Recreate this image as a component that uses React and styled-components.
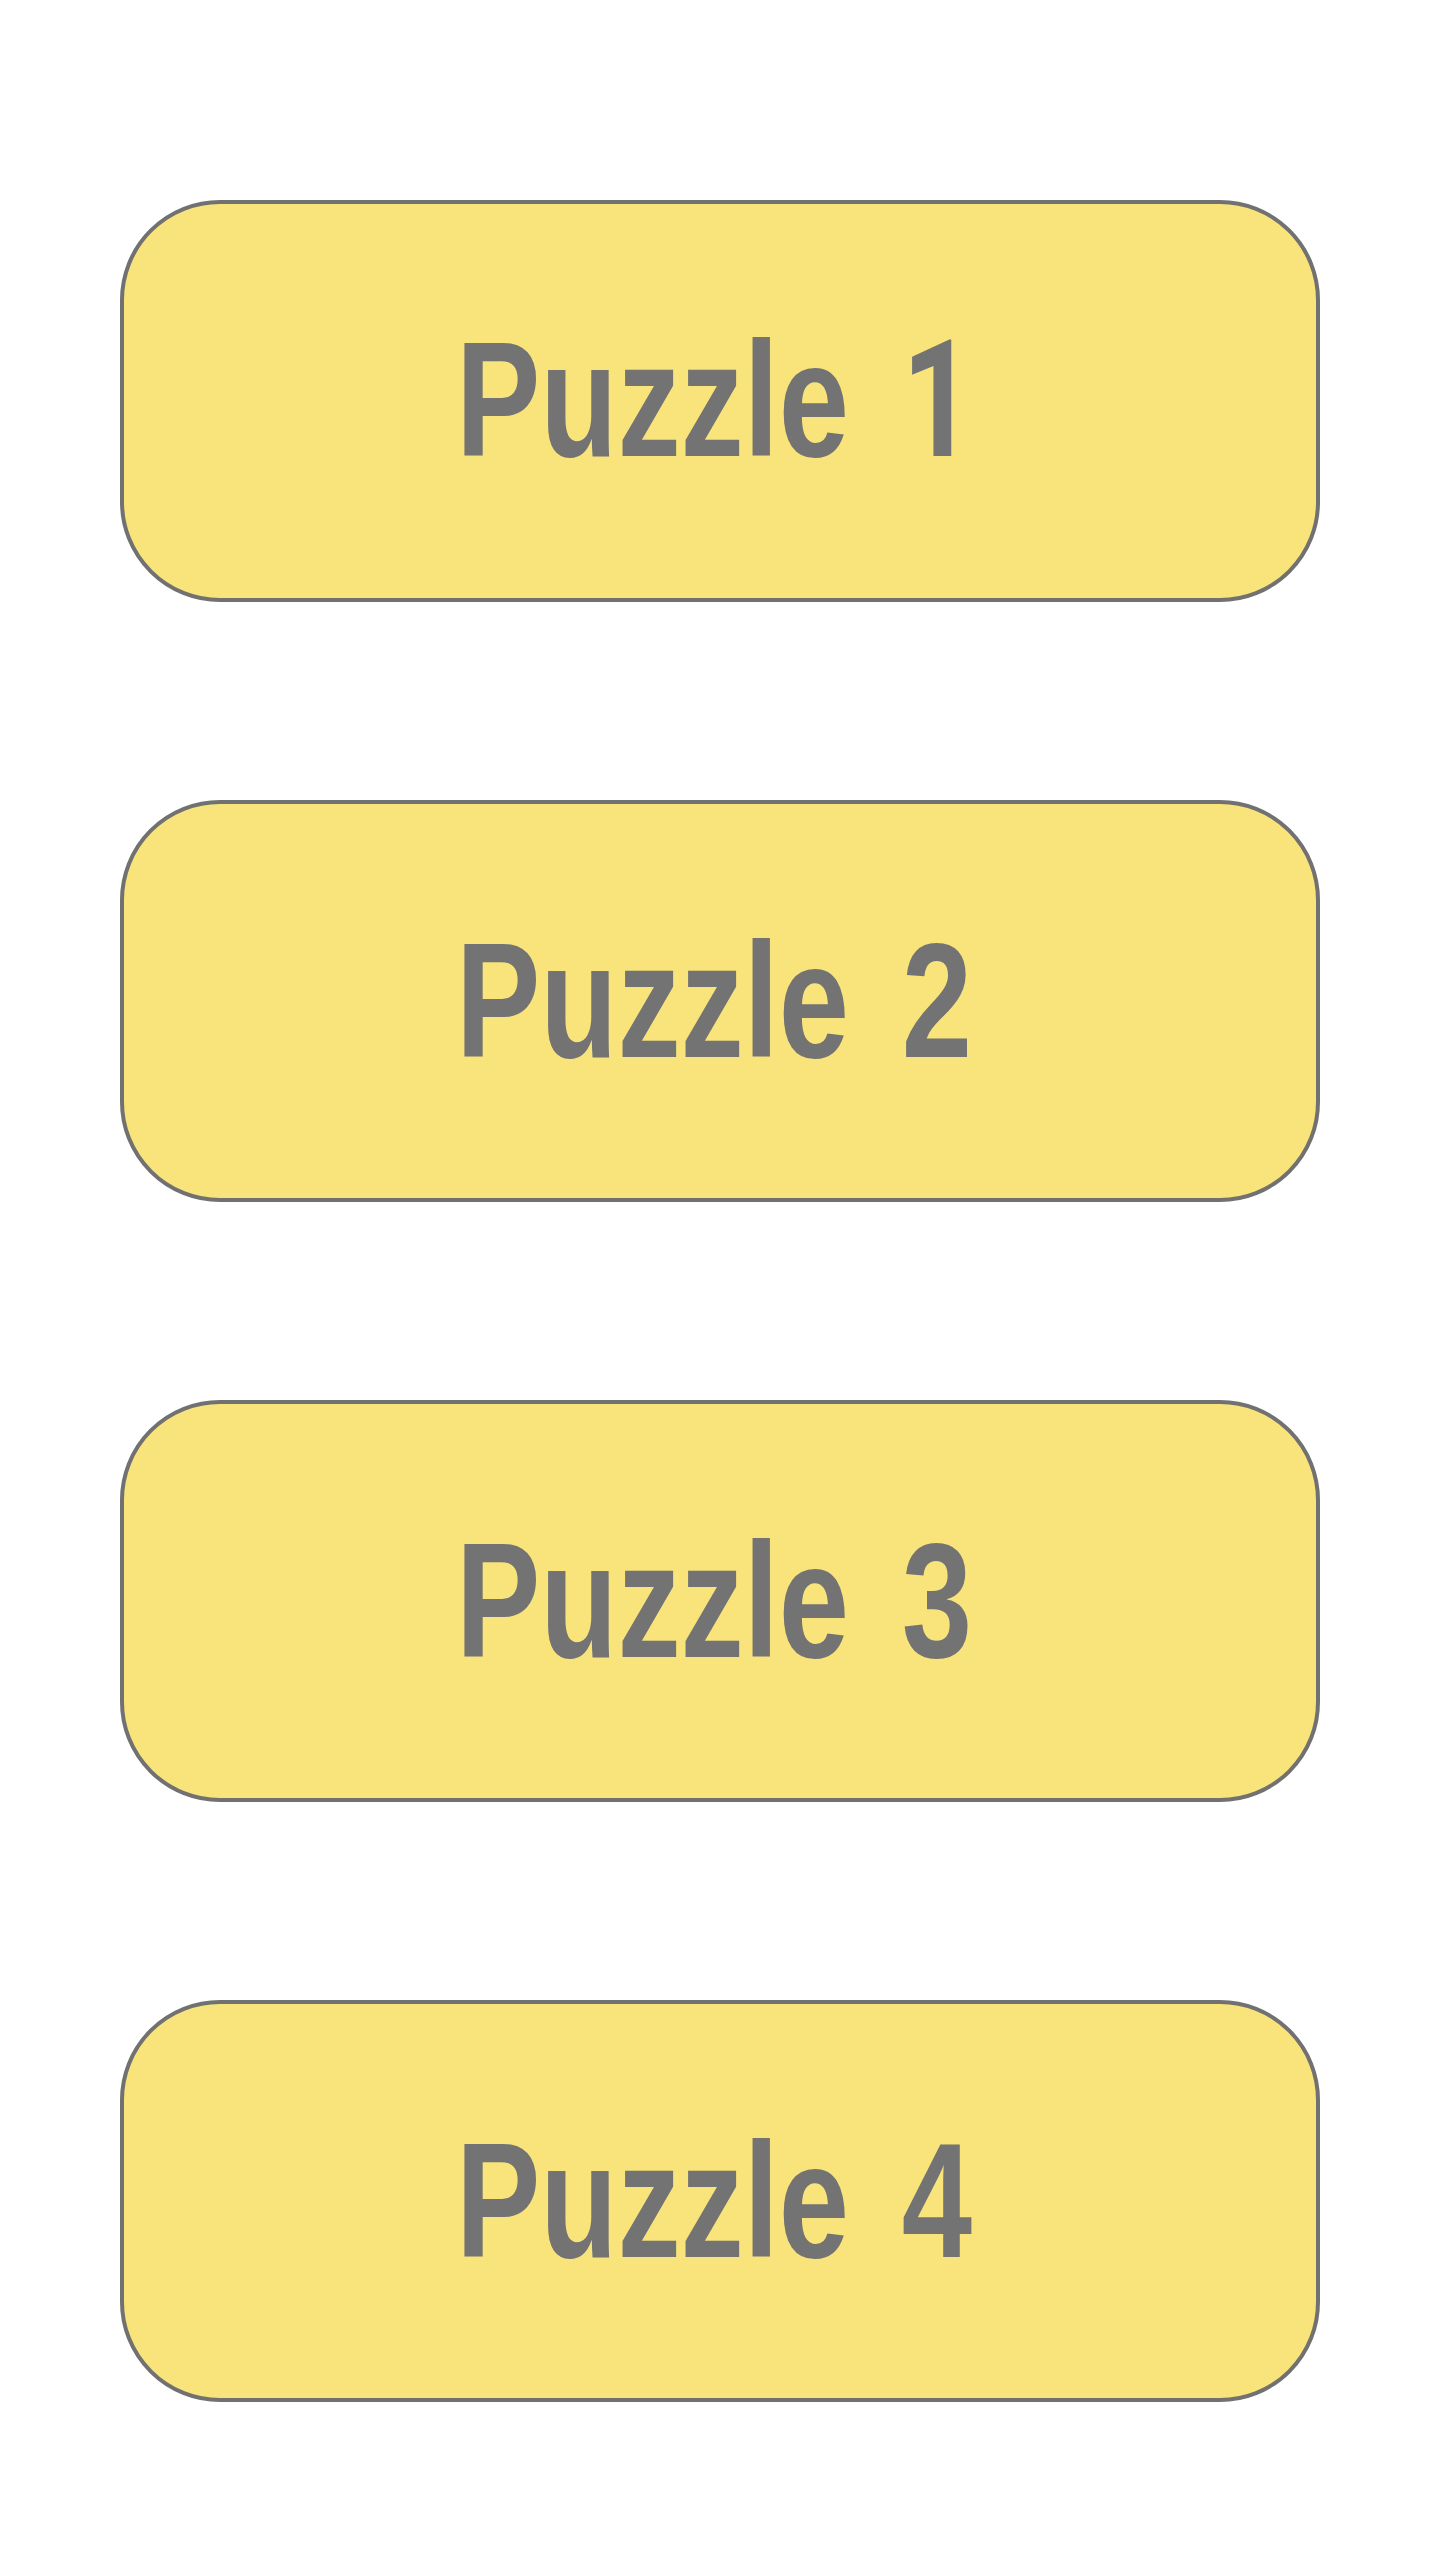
import React from "react";
import styled, { createGlobalStyle } from "styled-components";

const GlobalStyle = createGlobalStyle`
  html, body {
    margin: 0;
    padding: 0;
    background: #ffffff;
  }
  body {
    font-family: "Liberation Sans", Arial, sans-serif;
  }
`;

const Page = styled.main`
  display: flex;
  flex-direction: column;
  align-items: center;
  gap: 198px;
  padding: 200px 0 158px;
  min-height: 2560px;
  box-sizing: border-box;
`;

const PuzzleCard = styled.button`
  box-sizing: border-box;
  width: 1200px;
  height: 402px;
  display: flex;
  align-items: center;
  justify-content: flex-start;
  padding: 0 0 0 332px;
  background: #f9e47b;
  border: 4px solid #717171;
  border-radius: 100px;
  cursor: pointer;
  font: inherit;
`;

const Label = styled.span`
  display: inline-flex;
  align-items: baseline;
  font-family: "Liberation Sans", Arial, sans-serif;
  font-weight: 700;
  font-size: 163px;
  line-height: 1;
  color: #737373;
  white-space: pre;
  transform: translateY(-1px) scaleX(0.775);
  transform-origin: left center;
`;

const Number = styled.span`
  margin-left: 68px;
  font-family: ${(p) =>
    p.$plainOne ? `Roboto, "Liberation Sans", sans-serif` : `"Liberation Sans", Arial, sans-serif`};
  font-weight: 700;
`;

const puzzles = [1, 2, 3, 4];

export default function App() {
  return (
    <>
      <GlobalStyle />
      <Page>
        {puzzles.map((n) => (
          <PuzzleCard key={n} type="button">
            <Label>
              Puzzle
              <Number $plainOne={n === 1}>{n}</Number>
            </Label>
          </PuzzleCard>
        ))}
      </Page>
    </>
  );
}
